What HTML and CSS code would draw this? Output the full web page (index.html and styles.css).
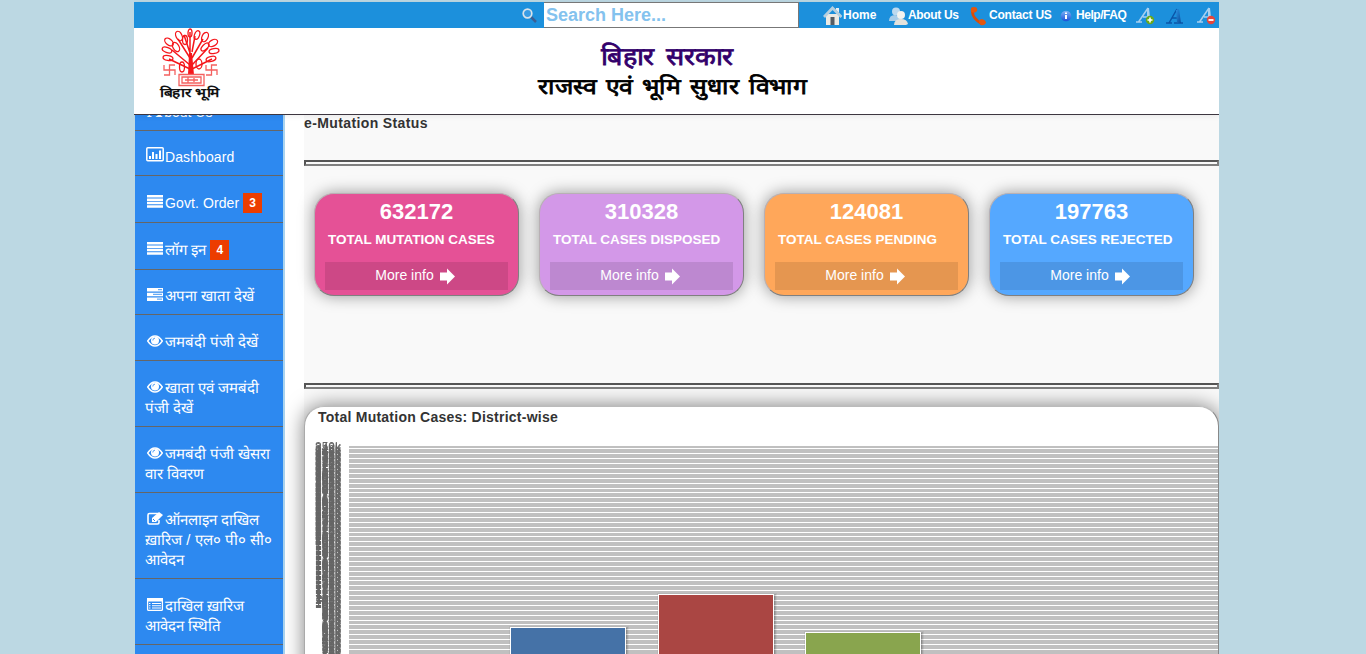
FILE: index.html
```html
<!DOCTYPE html>
<html lang="hi">
<head>
<meta charset="utf-8">
<title>बिहार भूमि</title>
<link rel="stylesheet" href="styles.css">
</head>
<body>
<svg class="defs" width="0" height="0">
  <defs>
    <linearGradient id="ga" x1="0" y1="0" x2="1" y2="1"><stop offset="0" stop-color="#2b8fe0"/><stop offset="1" stop-color="#0a4d9c"/></linearGradient>
    <linearGradient id="gi" x1="0" y1="0" x2="0" y2="1"><stop offset="0" stop-color="#7db4f5"/><stop offset="1" stop-color="#1a50d8"/></linearGradient>
    <symbol id="list" viewBox="0 0 16 13"><path fill="#fff" d="M0 0h16v2.600H0zM0 3.400h16v2.500H0zM0 6.800h16v2.500H0zM0 10.200h16v2.600H0z"/></symbol>
    <symbol id="eye" viewBox="0 0 16 12"><path d="M.7 6Q4 1 8 1t7.300 5Q12 11 8 11T.7 6z" fill="none" stroke="#fff" stroke-width="1.400"/><circle cx="8" cy="5.500" r="4" fill="#fff"/><path d="M5.800 5.500Q5.800 3.200 8 3.200" fill="none" stroke="#2d89f0" stroke-width=".8"/></symbol>
    <symbol id="arrow" viewBox="0 0 16 16"><path fill="#fff" d="M0 4h7V0l8 8-8 8v-4H0z"/></symbol>
  </defs>
</svg>
<div class="page">
  <header class="header">
    <div class="topbar">
      <svg class="search-icon" width="16" height="16" viewBox="0 0 16 16"><path d="M9 9l5 5" stroke="#3b5f94" stroke-width="2.500"/><circle cx="5.500" cy="5.500" r="4.300" fill="#3a9ce4" stroke="#d9e2ea" stroke-width="1.700"/></svg>
      <input class="search" type="text" placeholder="Search Here...">
      <nav class="links">
        <a class="link home"><svg width="19" height="20" viewBox="0 0 19 20"><path d="M3 8h13v11H3z" fill="#eceae4"/><path d="M7.500 11h4v8h-4z" fill="#555c63"/><path d="M13 2h3v5l-3-3z" fill="#e9eef2"/><path d="M1 11l8.500-9 9 9" fill="none" stroke="#b5cfdf" stroke-width="2.800"/></svg>Home</a>
        <a class="link about"><svg width="19" height="18" viewBox="0 0 19 18"><circle cx="7" cy="4.500" r="4" fill="#bcd9ef"/><path d="M0 14q0-6 6-6 5 0 6 6z" fill="#a9cde9"/><circle cx="12" cy="8" r="4" fill="#f4f3ef"/><path d="M5 18q0-6 7-6 6 0 7 5l-2 1z" fill="#e4e2dc"/></svg>About Us</a>
        <a class="link contact"><svg width="17" height="20" viewBox="0 0 17 20"><path d="M3 2Q0 11 12 18" fill="none" stroke="#d94c08" stroke-width="2.800"/><path d="M1 6Q0 1 4 1q4 0 3 4-2 3-6 1zM9 17q0-4 3-4 4 1 4 4-2 3-5 2z" fill="#e4560d"/></svg>Contact US</a>
        <a class="link help"><svg width="12" height="12" viewBox="0 0 12 12"><circle cx="6" cy="6" r="5.300" fill="url(#gi)"/><path d="M5 5h2v4H5zM5 2.400h2v1.600H5z" fill="#fff"/></svg>Help/FAQ</a>
        <svg class="font-plus" width="19" height="19" viewBox="0 0 19 19"><path d="M0 16h6M2.500 16L12 2M7 11h5" fill="none" stroke="#a8d0f0" stroke-width="1.500"/><path d="M11 2h2l1.500 14H11z" fill="#a8d0f0"/><circle cx="14" cy="14" r="4.200" fill="#69a81b"/><path d="M11.500 14h5M14 11.500v5" stroke="#fff" stroke-width="1.600"/></svg>
        <svg class="font-reset" width="18" height="18" viewBox="0 0 18 18"><path d="M0 16h6M3 16L11 2M8 16h9M6 11h6" fill="none" stroke="#0b55a8" stroke-width="1.500"/><path d="M10 3l3-1 2 14h-4z" fill="url(#ga)"/></svg>
        <svg class="font-minus" width="19" height="19" viewBox="0 0 19 19"><path d="M0 16h6M2.500 16L12 2M7 11h5" fill="none" stroke="#a8d0f0" stroke-width="1.500"/><path d="M11 2h2l1.500 14H11z" fill="#a8d0f0"/><circle cx="14" cy="14" r="4.200" fill="#e5463b"/><path d="M11.500 14h5" stroke="#fff" stroke-width="1.800"/></svg>
      </nav>
    </div>
    <div class="banner">
      <svg class="logo" width="64" height="74" viewBox="0 0 64 74">
        <g fill="none" stroke="#f5161b" stroke-width="1.500">
          <path d="M31 47V14M13 22l18 15M10 31l21 10M19 11l12 19M25 7l6 18M49 20L33 37M53 31l-20 10M44 11L33 30M36 8l-3 16M31 14V4"/>
          <path d="M29 47l1-22h3l2 22z" fill="#f5161b" stroke="none"/>
          <g stroke-width="1.300"><ellipse cx="31" cy="5" rx="2" ry="4"/><ellipse cx="20" cy="8" rx="3" ry="5" transform="rotate(-25 20 8)"/><ellipse cx="26" cy="12" rx="2.500" ry="4.500"/><ellipse cx="10" cy="14" rx="3" ry="5" transform="rotate(-50 10 14)"/><ellipse cx="8" cy="22" rx="2.500" ry="5" transform="rotate(-70 8 22)"/><ellipse cx="17" cy="19" rx="3" ry="5" transform="rotate(-30 17 19)"/><ellipse cx="9" cy="30" rx="2.500" ry="5" transform="rotate(-80 9 30)"/><ellipse cx="38" cy="7" rx="2.500" ry="4.500" transform="rotate(20 38 7)"/><ellipse cx="46" cy="9" rx="3" ry="5" transform="rotate(25 46 9)"/><ellipse cx="54" cy="15" rx="3" ry="5" transform="rotate(60 54 15)"/><ellipse cx="46" cy="19" rx="2.500" ry="5" transform="rotate(45 46 19)"/><ellipse cx="55" cy="23" rx="2.500" ry="5" transform="rotate(80 55 23)"/><ellipse cx="52" cy="31" rx="2.500" ry="5" transform="rotate(75 52 31)"/><ellipse cx="23" cy="39" rx="2.500" ry="5"/><ellipse cx="40" cy="36" rx="3" ry="5"/></g>
          <path stroke-width="1.300" stroke="#f4605f" d="M16 37h-5.500v10H5M5 37v5h11v5M58 37h-5.500v10H47M47 37v5h11v5M20 46.500h25v11H20zM23 49h19v6H23zM26 52h13M29 49v6M35 50v4"/>
        </g>
        <text class="logo-name" x="1" y="69" textLength="59" lengthAdjust="spacingAndGlyphs">बिहार भूमि</text>
      </svg>
      <svg class="title" width="280" height="70" viewBox="0 0 280 70">
        <text class="title-gov" x="67" y="30" textLength="132" lengthAdjust="spacingAndGlyphs">बिहार सरकार</text>
        <text class="title-dept" x="4" y="59" textLength="268" lengthAdjust="spacingAndGlyphs">राजस्व एवं भूमि सुधार विभाग</text>
      </svg>
    </div>
  </header>
  <main class="main">
    <aside class="sidebar">
      <a class="item first"><b class="big-a">A</b>bout Us</a>
      <a class="item dash en"><svg class="ic" width="18" height="15" viewBox="0 0 18 15"><rect x=".8" y=".8" width="16.400" height="13" rx="1" fill="none" stroke="#fff" stroke-width="1.500"/><path d="M3 9h2v3H3zM6 5h2v7H6zM9.500 7h2v5h-2zM13 3.500h2V12h-2z" fill="#fff"/></svg>Dashboard</a>
      <a class="item badged en"><svg class="ic" width="18" height="13"><use href="#list" x="1" width="16" height="13"/></svg>Govt. Order <span class="badge">3</span></a>
      <a class="item badged"><svg class="ic" width="18" height="13"><use href="#list" x="1" width="16" height="13"/></svg>लॉग इन <span class="badge">4</span></a>
      <a class="item dash"><svg class="ic" width="18" height="13" viewBox="-1 0 18 13"><path fill="#fff" d="M0 0h16v3.500H0zM0 4.700h16v3.500H0zM0 9.500h16V13H0z"/><path d="M11 1.700h4M6 6.400h9M10 11.200h5" stroke="#66aaf5" stroke-width="1.200"/></svg>अपना खाता देखें</a>
      <a class="item"><svg class="ic" width="18" height="12"><use href="#eye" x="1" width="16" height="12"/></svg>जमबंदी पंजी देखें</a>
      <a class="item"><svg class="ic" width="18" height="12"><use href="#eye" x="1" width="16" height="12"/></svg>खाता एवं जमबंदी<br>पंजी देखें</a>
      <a class="item"><svg class="ic" width="18" height="12"><use href="#eye" x="1" width="16" height="12"/></svg>जमबंदी पंजी खेसरा<br>वार विवरण</a>
      <a class="item"><svg class="ic" width="18" height="13" viewBox="-1 0 18 13"><path d="M11 1.500H2.500q-1.500 0-1.500 1.500v7.500Q1 12 2.500 12h8q1.500 0 1.500-1.500V8" fill="none" stroke="#fff" stroke-width="1.600"/><path d="M5 6l7-6 4 3-7 7H5z" fill="#fff"/><path d="M6 7l2 2" stroke="#2d89f0"/></svg>ऑनलाइन दाखिल<br>ख़ारिज / एल० पी० सी०<br>आवेदन</a>
      <a class="item"><svg class="ic" width="18" height="13" viewBox="-1 0 18 13"><rect x=".6" y=".6" width="14.800" height="11.800" rx="1" fill="none" stroke="#fff" stroke-width="1.300"/><path fill="#fff" d="M0 0h16v3.500H0zM2 5h1.500v1H2zM5 5h9v1H5zM2 7.300h1.500v1H2zM5 7.300h9v1H5zM2 9.500h1.500v1H2zM5 9.500h9v1H5z"/></svg>दाखिल ख़ारिज<br>आवेदन स्थिति</a>
    </aside>
    <section class="content">
      <h1 class="heading">e-Mutation Status</h1>
      <hr class="rule">
      <div class="cards">
        <article class="card pink"><strong class="count">632172</strong><span class="label">TOTAL MUTATION CASES</span><a class="more">More info<svg width="16" height="17"><use href="#arrow" width="16" height="17"/></svg></a></article>
        <article class="card violet"><strong class="count">310328</strong><span class="label">TOTAL CASES DISPOSED</span><a class="more">More info<svg width="16" height="17"><use href="#arrow" width="16" height="17"/></svg></a></article>
        <article class="card orange"><strong class="count">124081</strong><span class="label">TOTAL CASES PENDING</span><a class="more">More info<svg width="16" height="17"><use href="#arrow" width="16" height="17"/></svg></a></article>
        <article class="card blue"><strong class="count">197763</strong><span class="label">TOTAL CASES REJECTED</span><a class="more">More info<svg width="16" height="17"><use href="#arrow" width="16" height="17"/></svg></a></article>
      </div>
      <hr class="rule">
      <section class="panel">
        <h2 class="panel-title">Total Mutation Cases: District-wise</h2>
        <svg class="chart" id="chart" width="913" height="230" viewBox="0 0 913 230"></svg>
      </section>
    </section>
  </main>
</div>
<script src="chart.js"></script>
</body>
</html>
```
FILE: styles.css
```css
* { box-sizing: border-box; }
html, body { height: 100%; }
body { margin: 0; overflow: hidden; background: #bcd8e3; font-family: "Liberation Sans", Arial, sans-serif; font-size: 14px; }
.defs { position: absolute; }
.page { width: 1085px; height: 654px; margin-left: 134px; padding-top: 2px; overflow: hidden; display: flex; flex-direction: column; }
.header { flex: none; height: 113px; background: #fff; border-bottom: 1px solid #3d3640; position: relative; z-index: 2; box-shadow: 0 1px 6px rgba(0,0,0,.08); }
.topbar { height: 26px; background: #1c90dc; display: flex; align-items: center; padding-left: 388px; }
.search-icon { margin-right: 6px; margin-top: 2px; }
.search { width: 255px; height: 26px; border: 1px solid #777; border-left-width: 0; padding: 0 2px; font: bold 18px "Liberation Sans", Arial, sans-serif; background: #fff; border-radius: 0; }
.search::placeholder { color: #84c2ee; opacity: 1; }
.links { display: flex; align-items: center; height: 26px; margin-left: 24px; color: #fff; font-weight: bold; font-size: 12px; }
.link { display: flex; align-items: center; white-space: nowrap; }
.link svg { margin-top: 2px; }
.home { width: 66px; gap: 1px; }
.about { width: 81px; letter-spacing: -.35px; }
.contact { width: 90px; gap: 2px; letter-spacing: -.2px; }
.help { width: 76px; gap: 4px; letter-spacing: -.45px; }
.font-plus { margin-right: 11px; }
.font-reset { margin-right: 13px; margin-top: 2px; }
.banner { display: flex; height: 86px; }
.logo { margin-left: 25px; flex: none; }
.logo-name { font: bold 12.5px "Liberation Sans", sans-serif; fill: #111; }
.title { margin: 7px 0 0 311px; flex: none; }
.title-gov { font: 25px "Liberation Serif", serif; fill: #33006b; stroke: #33006b; stroke-width: .8px; word-spacing: 5px; }
.title-dept { font: 22px "Liberation Serif", serif; fill: #000; stroke: #000; stroke-width: .8px; word-spacing: 3px; }
.main { display: flex; flex: 1; min-height: 0; background: #fff; margin-left: 1px; }
.sidebar { width: 150px; flex: none; overflow: hidden; border-right: 2px solid #a9d3ef; background: #2d89f0; color: #fff; font-size: 15px; }
.item { display: block; padding: 17px 0 8px 10px; line-height: 20px; border-bottom: 1px solid #666; white-space: nowrap; }
.first { margin-top: -30px; font-size: 14px; }
.en { font-size: 14px; letter-spacing: .1px; }
.dash { padding-top: 16px; }
.badged { padding-bottom: 9px; }
.big-a { font-family: "Liberation Serif", serif; font-size: 21px; line-height: 16px; margin: 0 2px; }
.ic { vertical-align: 0; margin: 0 1px; }
.badge { display: inline-block; height: 20px; width: 19px; background: #ec3d00; font-size: 12px; font-weight: bold; text-align: center; vertical-align: top; }
.content { flex: none; width: 915px; margin-left: 19px; background: #f9f9f9; }
.heading { margin: 0; font-size: 14px; line-height: 16px; height: 45px; color: #333; letter-spacing: .38px; }
.rule { margin: 0; height: 6px; border: 2px solid; border-color: #555 #808080 #808080 #555; }
.cards { display: flex; gap: 20px; height: 217px; padding: 27px 0 0 10px; }
.card { width: 205px; height: 103px; border: 1px solid; border-color: #b8b0b4 #808080 #808080 #b8b0b4; border-radius: 20px; box-shadow: 0 0 16px rgba(0,0,0,.4); color: #fff; padding: 0 10px 5px; display: flex; flex-direction: column; }
.count { font-size: 22px; line-height: 34px; height: 34px; text-align: center; padding-top: 1px; }
.label { font-size: 13.5px; font-weight: bold; line-height: 16px; padding: 4px 0 0 3px; height: 34px; white-space: nowrap; }
.more { display: flex; height: 28px; justify-content: center; align-items: center; gap: 6px; background: rgba(0,0,0,.1); padding: 0 2px 3px 0; }
.more svg { margin-top: 3px; }
.pink { background: #e55196; }
.violet { background: #d398e8; }
.orange { background: #ffa75a; }
.blue { background: #55a8ff; }
.panel { height: 300px; margin-top: 17px; border: 1px solid #888; border-top-color: #bbb; border-left-color: #aaa; border-radius: 20px; background: #fff; box-shadow: 0 0 20px rgba(0,0,0,.5); overflow: hidden; }
.panel-title { margin: 2px 0 0 13px; font-size: 14px; line-height: 16px; color: #333; letter-spacing: .24px; }
.chart { display: block; margin-top: 9px; will-change: transform; }
.grid { stroke: #c0c0c0; stroke-width: 1; shape-rendering: crispEdges; }
.tick { font-size: 12px; fill: #666; text-anchor: end; }
.bar { stroke: #fff; stroke-width: 1; }
.bar-shadow { fill: none; stroke: #000; }
```
FILE: chart.js
```js
const svg = document.getElementById('chart');
const NS = 'http://www.w3.org/2000/svg';
function add(name, attrs, text) {
  const el = document.createElementNS(NS, name);
  for (const key in attrs) el.setAttribute(key, attrs[key]);
  if (text) el.textContent = text;
  svg.appendChild(el);
}
// Axis runs from 350k at the top down to zero in steps of 2k.
const top0 = 12, height = 220, max = 350;
for (let v = max; v >= 0; v -= 2) {
  const y = top0 + (max - v) * height / max;
  add('line', { class: 'grid', x1: 44, x2: 913, y1: Math.round(y) + 0.5, y2: Math.round(y) + 0.5 });
}
[[205, 193, '#4572a7'], [353, 160, '#aa4643'], [500, 198, '#89a54e']].forEach(([x, y, fill]) => {
  [[5, .05], [3, .1], [1, .15]].forEach(([w, o]) =>
    add('rect', { class: 'bar-shadow', x: x + 1.5, y: y + 1.5, width: 115, height: 200, 'stroke-width': w, 'stroke-opacity': o }));
  add('rect', { class: 'bar', x: x + 0.5, y: y + 0.5, width: 115, height: 200, fill });
});
for (let v = max; v >= 0; v -= 2) {
  const y = top0 + (max - v) * height / max;
  add('text', { class: 'tick', x: 36, y: y + 5 }, v + 'k');
}
```
